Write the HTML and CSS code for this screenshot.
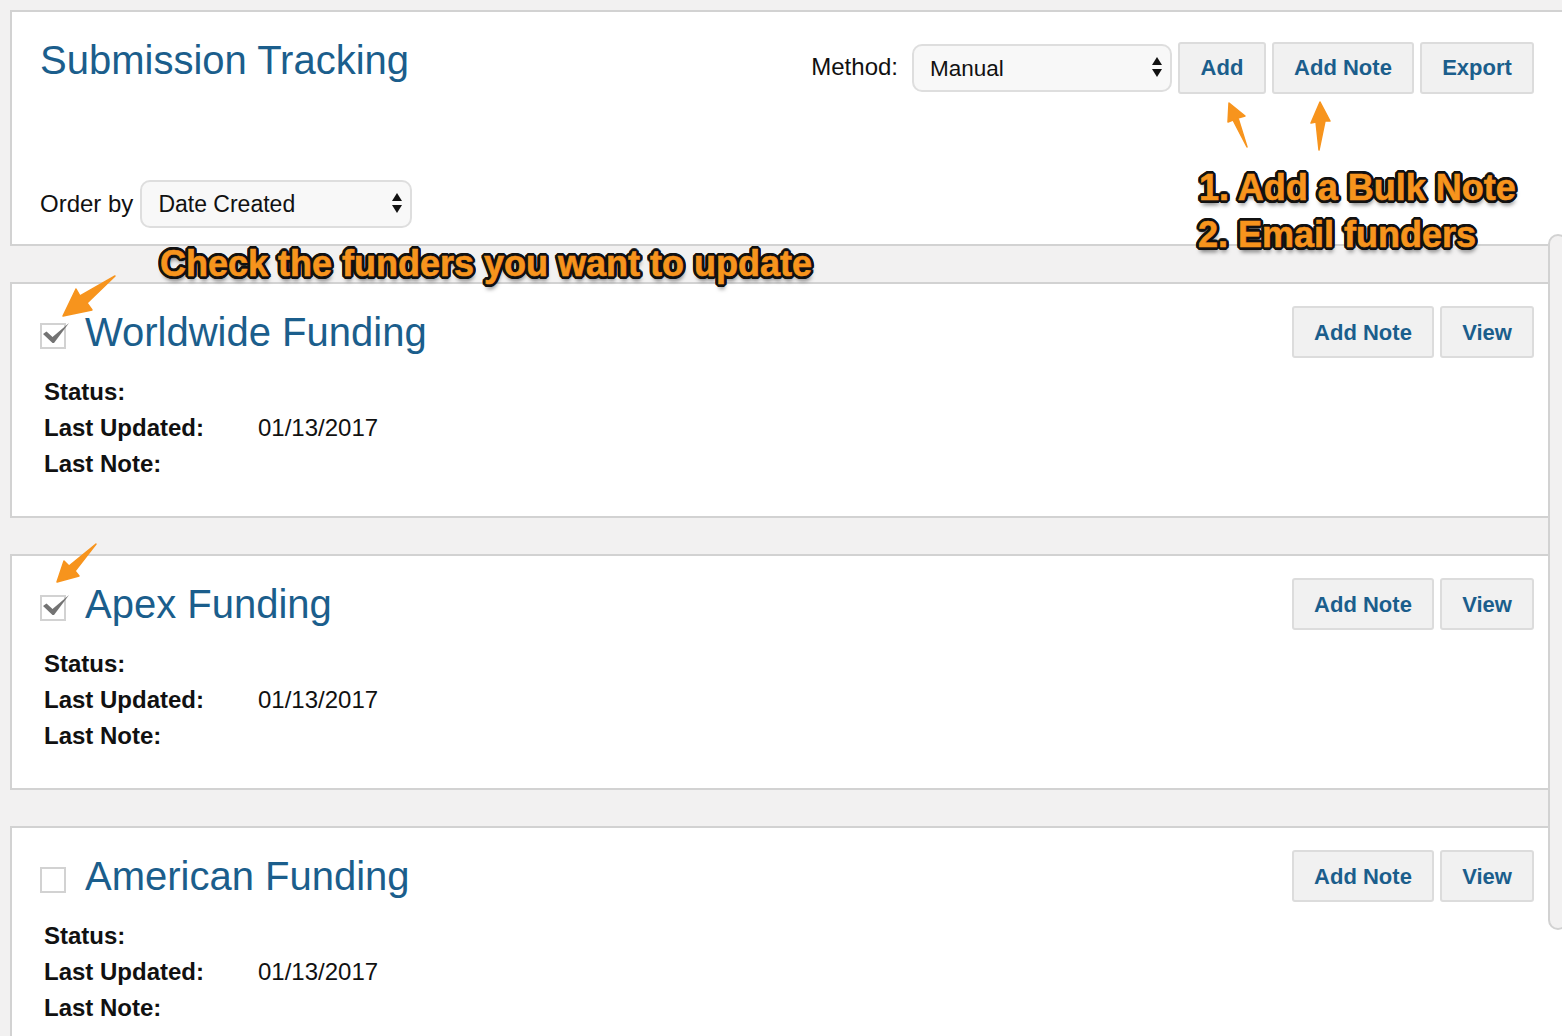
FILE: index.html
```html
<!DOCTYPE html>
<html lang="en">
<head>
    <meta charset="UTF-8">
    <meta name="viewport" content="width=device-width, initial-scale=1.0">
    <title>Submission Tracking</title>
    <link rel="stylesheet" href="styles.css">
</head>
<body>
    <div class="page">
        <section class="header-card">
            <div class="header-top">
                <h1 class="title">Submission Tracking</h1>
                <div class="method-bar">
                    <label class="method-label" for="methodSelect">Method:</label>
                    <span class="select-wrap method-select">
                        <select id="methodSelect"><option>Manual</option></select>
                    </span>
                    <button class="btn btn-add">Add</button>
                    <button class="btn btn-note">Add Note</button>
                    <button class="btn btn-export">Export</button>
                </div>
            </div>
            <div class="order-bar">
                <label class="order-label" for="orderSelect">Order by</label>
                <span class="select-wrap order-select">
                    <select id="orderSelect"><option>Date Created</option></select>
                </span>
            </div>
        </section>

        <section class="card">
            <div class="card-head">
                <span class="check">
                    <svg class="tick" viewBox="0 0 30 24"><path d="M3 11 L6.5 8.5 L12.5 14 L29 0 L14 20 L12.5 20 Z"/></svg>
                </span>
                <h2 class="name">Worldwide Funding</h2>
                <div class="card-actions">
                    <button class="btn btn-card-note">Add Note</button>
                    <button class="btn btn-card-view">View</button>
                </div>
            </div>
            <dl class="facts">
                <dt>Status:</dt><dd></dd>
                <dt>Last Updated:</dt><dd>01/13/2017</dd>
                <dt>Last Note:</dt><dd></dd>
            </dl>
        </section>

        <section class="card">
            <div class="card-head">
                <span class="check">
                    <svg class="tick" viewBox="0 0 30 24"><path d="M3 11 L6.5 8.5 L12.5 14 L29 0 L14 20 L12.5 20 Z"/></svg>
                </span>
                <h2 class="name">Apex Funding</h2>
                <div class="card-actions">
                    <button class="btn btn-card-note">Add Note</button>
                    <button class="btn btn-card-view">View</button>
                </div>
            </div>
            <dl class="facts">
                <dt>Status:</dt><dd></dd>
                <dt>Last Updated:</dt><dd>01/13/2017</dd>
                <dt>Last Note:</dt><dd></dd>
            </dl>
        </section>

        <section class="card">
            <div class="card-head">
                <span class="check"></span>
                <h2 class="name">American Funding</h2>
                <div class="card-actions">
                    <button class="btn btn-card-note">Add Note</button>
                    <button class="btn btn-card-view">View</button>
                </div>
            </div>
            <dl class="facts">
                <dt>Status:</dt><dd></dd>
                <dt>Last Updated:</dt><dd>01/13/2017</dd>
                <dt>Last Note:</dt><dd></dd>
            </dl>
        </section>
    </div>

    <!-- side panel edge -->
    <div class="side-edge"></div>

    <!-- annotations drawn on top of the page -->
    <svg class="arrows" width="1562" height="1036" viewBox="0 0 1562 1036">
        <path class="arrow" d="M1247 147 L1238 118 L1245 116 L1229 103 L1228 122 L1233 120 Z"/>
        <path class="arrow" d="M1319 150 L1316 122 L1311 123 L1320 102 L1330 121 L1325 121 Z"/>
        <path class="arrow" d="M115 276 L80 296 L76 289 L63 316 L92 310 L87 303 Z"/>
        <path class="arrow" d="M96 544 L69 566 L64 561 L57 582 L79 576 L75 571 Z"/>
    </svg>
    <div class="note note-funders">Check the funders you want to update</div>
    <div class="note note-bulk">1. Add a Bulk Note</div>
    <div class="note note-email">2. Email funders</div>
</body>
</html>
```

FILE: styles.css
```css
* {
    box-sizing: border-box;
}
body {
    margin: 0;
    height: 1036px;
    overflow: hidden;
    background: #f2f1f1;
    font-family: "Liberation Sans", Arial, sans-serif;
    color: #111;
}
.page {
    padding: 10px 0 0 10px;
}
.header-card {
    height: 236px;
    padding: 0 28px 0 28px;
    background: #fff;
    border: 2px solid #d2d2d2;
    border-right: none;
    display: flex;
    flex-direction: column;
    justify-content: space-between;
}
.header-top {
    display: flex;
    justify-content: space-between;
    align-items: flex-start;
    padding-top: 30px;
}
.title {
    margin: -2px 0 0;
    font-size: 40px;
    font-weight: normal;
    line-height: 40px;
    color: #1b5e8c;
}
.method-bar {
    display: flex;
    align-items: flex-start;
    gap: 6px;
}
.method-label {
    margin-right: 8px;
    font-size: 24px;
    line-height: 50px;
}
.select-wrap {
    position: relative;
    display: block;
    height: 48px;
}
.select-wrap::before,
.select-wrap::after {
    content: "";
    position: absolute;
    right: 10px;
    border-left: 5px solid transparent;
    border-right: 5px solid transparent;
    pointer-events: none;
}
.select-wrap::before {
    top: 13px;
    border-bottom: 8px solid #111;
}
.select-wrap::after {
    top: 25px;
    border-top: 8px solid #111;
}
.select-wrap select {
    appearance: none;
    -webkit-appearance: none;
    width: 100%;
    height: 100%;
    padding: 0 16px;
    background: #f8f8f8;
    border: 2px solid #dedede;
    border-radius: 10px;
    font-family: "Liberation Sans", Arial, sans-serif;
    font-size: 23px;
    color: #111;
}
.method-select {
    width: 260px;
    margin-top: 2px;
}
.method-select select {
    font-size: 22.5px;
}
.order-select {
    width: 272px;
}
.order-bar {
    display: flex;
    align-items: center;
    gap: 7px;
    padding-bottom: 16px;
}
.order-label {
    font-size: 24px;
}
.btn {
    height: 52px;
    padding: 0;
    background: #f1f1f1;
    border: 2px solid #dcdcdc;
    border-radius: 3px;
    font-family: "Liberation Sans", Arial, sans-serif;
    font-size: 22px;
    font-weight: bold;
    color: #1b5e8c;
}
.btn-add {
    width: 88px;
}
.btn-note,
.btn-card-note {
    width: 142px;
}
.btn-export {
    width: 114px;
}
.btn-card-note,
.btn-card-view {
    padding-top: 2px;
}
.btn-card-view {
    width: 94px;
}
.card {
    height: 236px;
    margin-top: 36px;
    padding: 22px 28px 0 28px;
    background: #fff;
    border: 2px solid #d2d2d2;
    border-right: none;
}
.card-head {
    display: flex;
    align-items: flex-start;
}
.check {
    width: 26px;
    height: 26px;
    margin-top: 17px;
    background: #fff;
    border: 2px solid #d2d2d2;
    position: relative;
}
.tick {
    position: absolute;
    left: -2px;
    top: -2px;
    width: 30px;
    height: 24px;
    overflow: visible;
}
.tick path {
    fill: #737373;
    filter: blur(0.5px);
}
.name {
    margin: 3px 0 0 19px;
    flex: 1;
    font-size: 40px;
    font-weight: normal;
    line-height: 46px;
    color: #1b5e8c;
}
.card-actions {
    display: flex;
    gap: 6px;
}
.facts {
    display: grid;
    grid-template-columns: 214px 1fr;
    grid-auto-rows: 36px;
    margin: 16px 0 0 4px;
    font-size: 24px;
    line-height: 36px;
}
.facts dt {
    font-weight: bold;
}
.facts dd {
    margin: 0;
}
.side-edge {
    position: absolute;
    left: 1548px;
    top: 234px;
    width: 20px;
    height: 696px;
    background: #f2f1f1;
    border: 2px solid #d2d2d2;
    border-radius: 12px;
}
.arrows {
    position: absolute;
    left: 0;
    top: 0;
    pointer-events: none;
}
.arrow {
    fill: #f7941d;
    stroke: #f7941d;
    stroke-width: 1.5px;
    stroke-linejoin: round;
}
/* outline built from shadows so the fill always stays on top */
.note {
    position: absolute;
    font-size: 36px;
    font-weight: bold;
    line-height: 42px;
    white-space: nowrap;
    color: #f7941d;
    -webkit-text-stroke: 0.6px #f7941d;
    text-shadow:
        3px 0 0 #111, -3px 0 0 #111, 0 3px 0 #111, 0 -3px 0 #111,
        2px 2px 0 #111, -2px 2px 0 #111, 2px -2px 0 #111, -2px -2px 0 #111,
        3px 1px 0 #111, -3px 1px 0 #111, 3px -1px 0 #111, -3px -1px 0 #111,
        1px 3px 0 #111, -1px 3px 0 #111, 1px -3px 0 #111, -1px -3px 0 #111,
        1px 5px 4px rgba(0, 0, 0, 0.5);
}
.note-funders {
    left: 160px;
    top: 243px;
}
.note-bulk {
    left: 1199px;
    top: 167px;
}
.note-email {
    left: 1198px;
    top: 214px;
}
```
